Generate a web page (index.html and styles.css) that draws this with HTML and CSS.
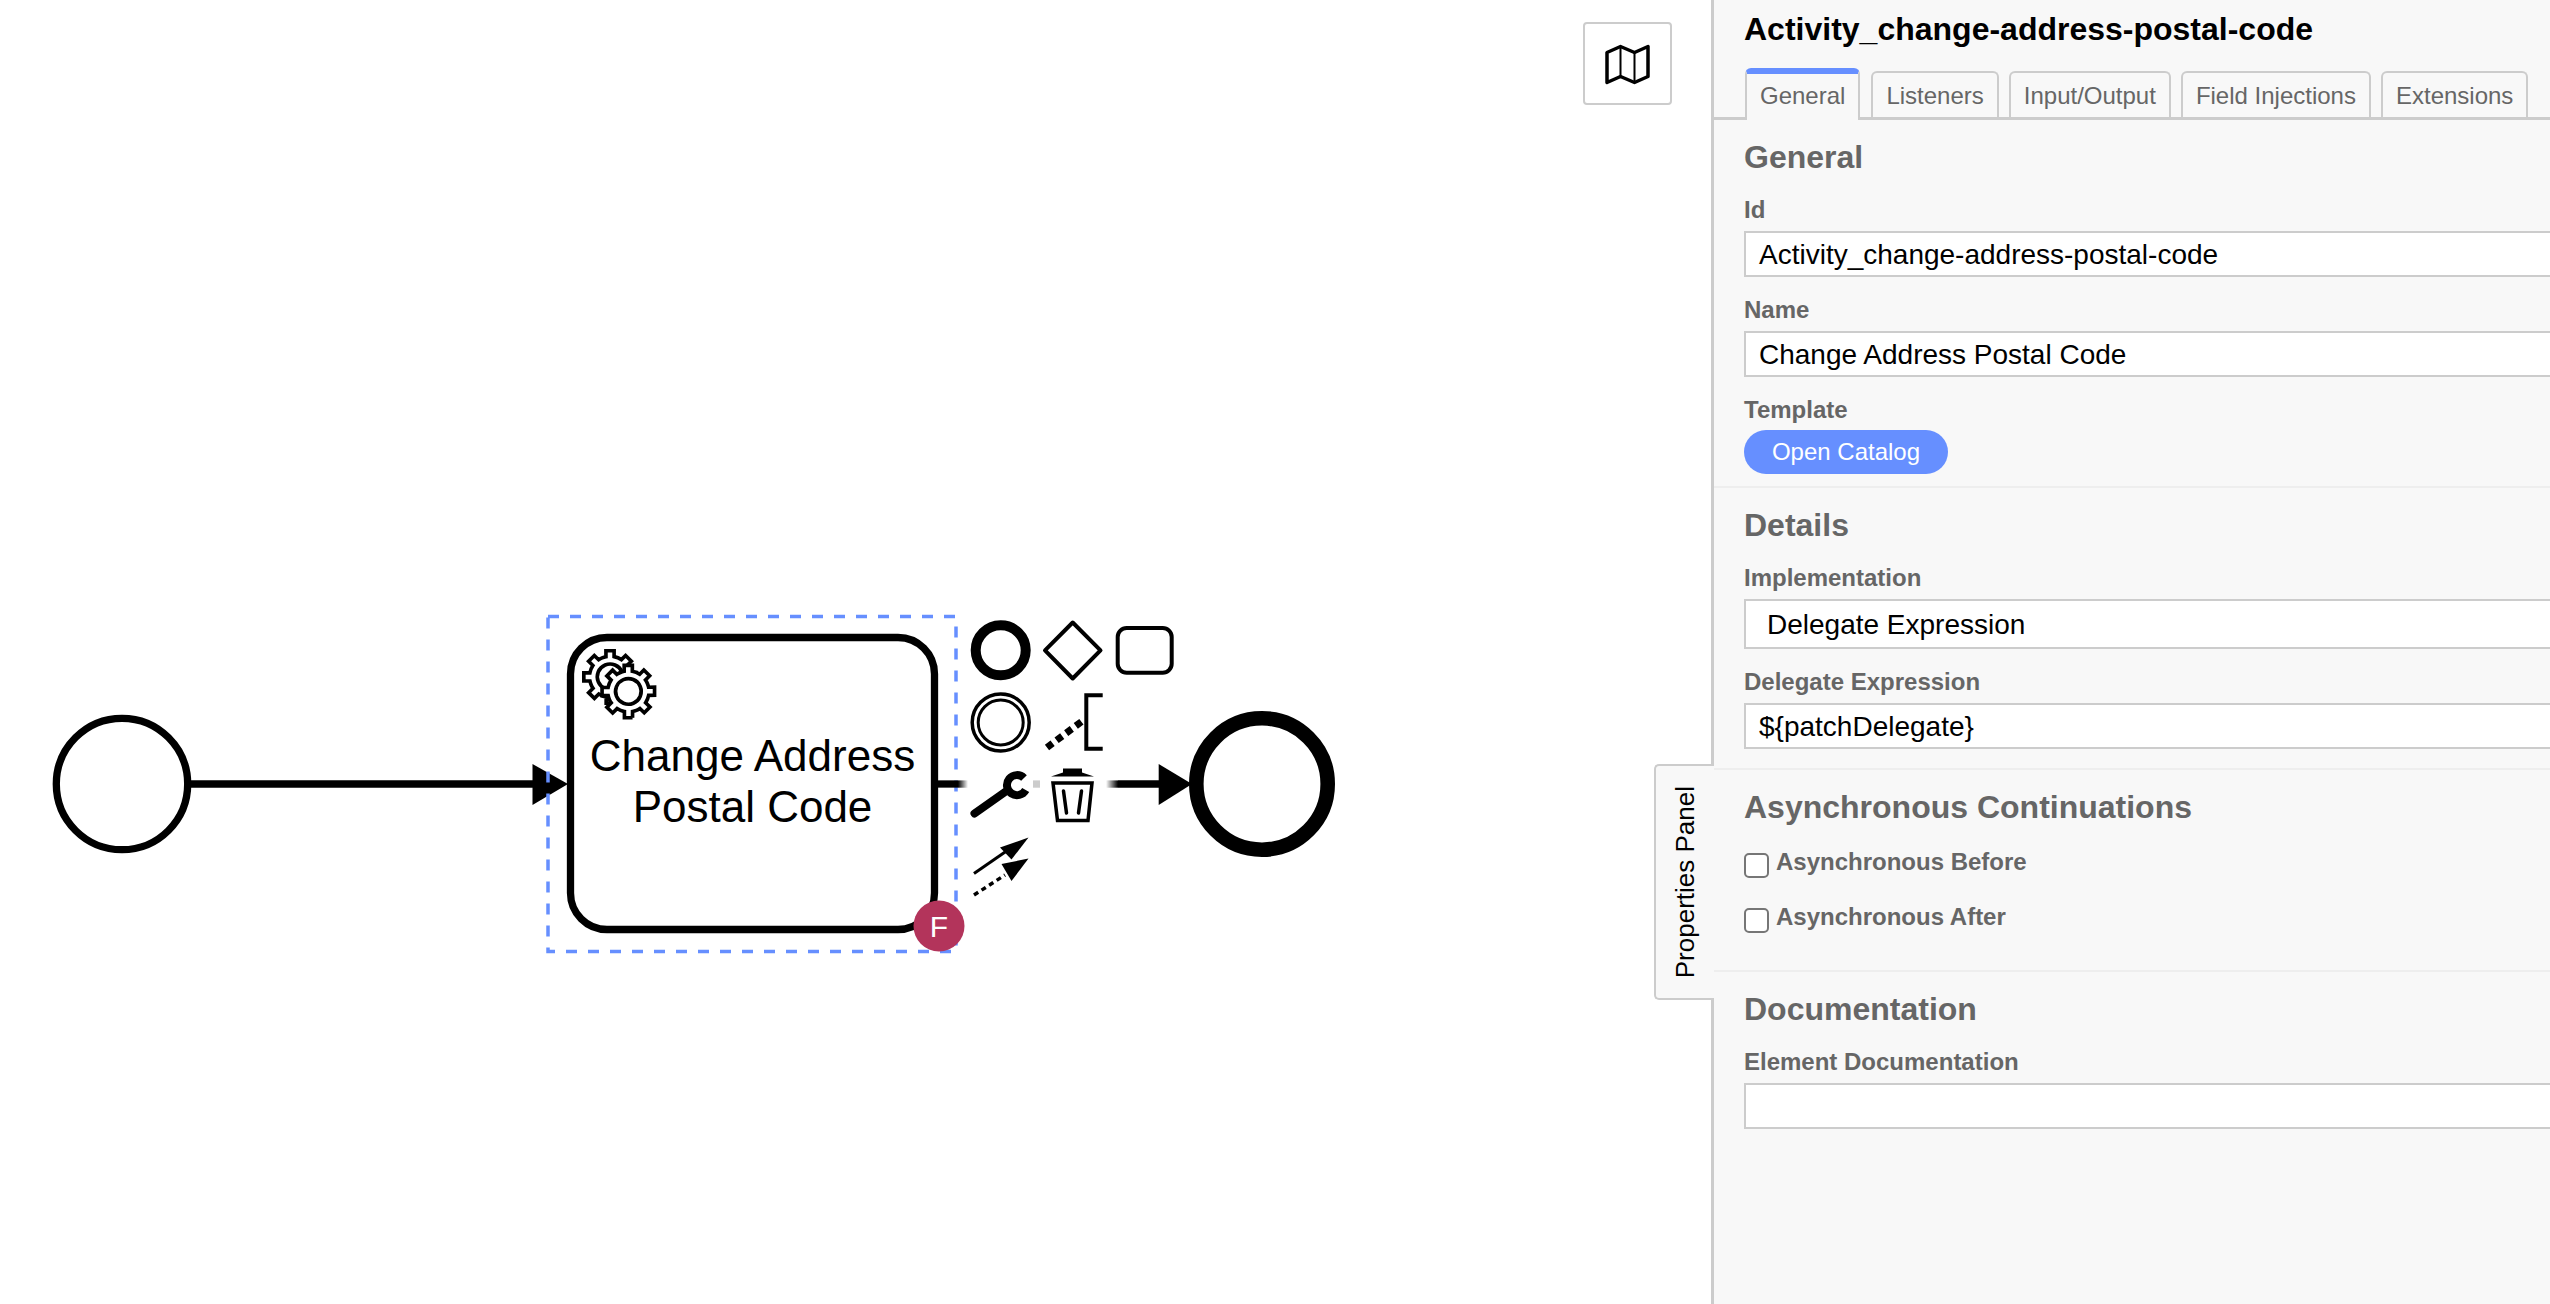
FILE: index.html
```html
<!DOCTYPE HTML>
<html>
<head>
<title>Activity_change-address-postal-code</title>
<meta charset="utf-8" />
<link rel="stylesheet" href="styles.css">
</head>
<body>
  <div class="canvas">
    <svg class="diagram" width="1711" height="1304" viewBox="0 0 1711 1304">
      <defs>
        <linearGradient id="fade-out" gradientUnits="userSpaceOnUse" x1="958" y1="0" x2="968" y2="0">
          <stop offset="0" stop-color="#000"/><stop offset="1" stop-color="#000" stop-opacity="0"/>
        </linearGradient>
        <linearGradient id="fade-in" gradientUnits="userSpaceOnUse" x1="1106" y1="0" x2="1118" y2="0">
          <stop offset="0" stop-color="#000" stop-opacity="0"/><stop offset="1" stop-color="#000"/>
        </linearGradient>
      </defs>

      <!-- start event -->
      <circle cx="122" cy="784" r="65.7" fill="#fff" stroke="#000" stroke-width="7.3"/>
      <line x1="190" y1="784" x2="540" y2="784" stroke="#000" stroke-width="7.3"/>

      <!-- task -->
      <rect x="570.5" y="637.5" width="364" height="292" rx="36.5" fill="#fff" stroke="#000" stroke-width="7.3"/>
      <polygon points="532.5,764 568,784 532.5,805" fill="#000"/>
      <g transform="translate(570.5 637.5) scale(3.65)" fill="#fff" stroke="#000" stroke-width="1">
        <path d="m 12,18 v -1.71335 c 0.352326,-0.0705 0.703932,-0.17838 1.047628,-0.32133 0.344416,-0.14465 0.665822,-0.32133 0.966377,-0.52145 l 1.19431,1.18005 1.567487,-1.57688 -1.195028,-1.18014 c 0.403376,-0.61394 0.683079,-1.29908 0.825447,-2.01824 l 1.622133,-0.01 v -2.2196 l -1.636514,0.01 c -0.07333,-0.35153 -0.178319,-0.70024 -0.323564,-1.04372 -0.145244,-0.34406 -0.321407,-0.6644 -0.522735,-0.96217 l 1.131035,-1.13631 -1.583305,-1.56293 -1.129598,1.13589 c -0.614052,-0.40108 -1.302883,-0.68093 -2.022633,-0.82247 l 0.0093,-1.61852 h -2.241173 l 0.0042,1.63124 c -0.353763,0.0736 -0.705369,0.17977 -1.049785,0.32371 -0.344415,0.14437 -0.665102,0.32092 -0.9635006,0.52046 l -1.1698628,-1.15823 -1.5667691,1.5792 1.1684265,1.15669 c -0.4026573,0.61283 -0.68308,1.29797 -0.8247287,2.01713 l -1.6588041,0.003 v 2.22174 l 1.6724648,-0.006 c 0.073327,0.35077 0.1797598,0.70243 0.3242851,1.04472 0.1452428,0.34448 0.3214064,0.6644 0.5227339,0.96066 l -1.1993431,1.19723 1.5840256,1.56011 1.1964668,-1.19348 c 0.6140517,0.40346 1.3028827,0.68232 2.0233517,0.82331 l 7.19e-4,1.69892 h 2.226848 z m 0.221462,-3.9957 c -1.788948,0.7502 -3.8576,-0.0928 -4.6097055,-1.87438 -0.7521065,-1.78321 0.090598,-3.84627 1.8802645,-4.59604 1.78823,-0.74936 3.856881,0.0929 4.608987,1.87437 0.752106,1.78165 -0.0906,3.84612 -1.879546,4.59605 z"/>
        <circle cx="15.86" cy="14.77" r="3.5" stroke="none"/>
        <path d="m 17,22 v -1.71335 c 0.352326,-0.0705 0.703932,-0.17838 1.047628,-0.32133 0.344416,-0.14465 0.665822,-0.32133 0.966377,-0.52145 l 1.19431,1.18005 1.567487,-1.57688 -1.195028,-1.18014 c 0.403376,-0.61394 0.683079,-1.29908 0.825447,-2.01824 l 1.622133,-0.01 v -2.2196 l -1.636514,0.01 c -0.07333,-0.35153 -0.178319,-0.70024 -0.323564,-1.04372 -0.145244,-0.34406 -0.321407,-0.6644 -0.522735,-0.96217 l 1.131035,-1.13631 -1.583305,-1.56293 -1.129598,1.13589 c -0.614052,-0.40108 -1.302883,-0.68093 -2.022633,-0.82247 l 0.0093,-1.61852 h -2.241173 l 0.0042,1.63124 c -0.353763,0.0736 -0.705369,0.17977 -1.049785,0.32371 -0.344415,0.14437 -0.665102,0.32092 -0.9635006,0.52046 l -1.1698628,-1.15823 -1.5667691,1.5792 1.1684265,1.15669 c -0.4026573,0.61283 -0.68308,1.29797 -0.8247287,2.01713 l -1.6588041,0.003 v 2.22174 l 1.6724648,-0.006 c 0.073327,0.35077 0.1797598,0.70243 0.3242851,1.04472 0.1452428,0.34448 0.3214064,0.6644 0.5227339,0.96066 l -1.1993431,1.19723 1.5840256,1.56011 1.1964668,-1.19348 c 0.6140517,0.40346 1.3028827,0.68232 2.0233517,0.82331 l 7.19e-4,1.69892 h 2.226848 z m 0.221462,-3.9957 c -1.788948,0.7502 -3.8576,-0.0928 -4.6097055,-1.87438 -0.7521065,-1.78321 0.090598,-3.84627 1.8802645,-4.59604 1.78823,-0.74936 3.856881,0.0929 4.608987,1.87437 0.752106,1.78165 -0.0906,3.84612 -1.879546,4.59605 z"/>
      </g>
      <text class="task-label" x="752.5" y="771">Change Address</text>
      <text class="task-label" x="752.5" y="822">Postal Code</text>

      <!-- selection outline -->
      <rect x="548" y="616.5" width="408" height="335" fill="none" stroke="#668fff" stroke-width="3.5" stroke-dasharray="11 11"/>

      <!-- outgoing flow, hidden behind the context pad -->
      <line x1="938" y1="784" x2="958" y2="784" stroke="#000" stroke-width="7.3"/>
      <rect x="958" y="780.4" width="10" height="7.3" fill="url(#fade-out)"/>
      <rect x="1033" y="780.4" width="7" height="7.3" fill="#ccc"/>
      <rect x="1106" y="780.4" width="12" height="7.3" fill="url(#fade-in)"/>
      <line x1="1118" y1="784" x2="1165" y2="784" stroke="#000" stroke-width="7.3"/>
      <polygon points="1158.7,764 1192,784 1158.7,805" fill="#000"/>

      <!-- end event -->
      <circle cx="1262" cy="784" r="65.7" fill="#fff" stroke="#000" stroke-width="14.6"/>

      <!-- badge -->
      <ellipse cx="939" cy="926" rx="25.5" ry="25.5" fill="#b3345b"/>
      <text class="badge-label" x="939" y="937">F</text>

      <!-- context pad -->
      <circle cx="1000.7" cy="650.3" r="25" fill="none" stroke="#000" stroke-width="10"/>
      <polygon points="1072.7,622.5 1100.5,650.3 1072.7,678.5 1045,650.3" fill="none" stroke="#000" stroke-width="4" stroke-linejoin="round"/>
      <rect x="1117.7" y="628" width="54" height="44.7" rx="9" fill="none" stroke="#000" stroke-width="4"/>
      <circle cx="1000.7" cy="722.5" r="28.5" fill="none" stroke="#000" stroke-width="3.5"/>
      <circle cx="1000.7" cy="722.5" r="22.5" fill="none" stroke="#000" stroke-width="3"/>
      <path d="M1102.7 695.3 H1086.3 V748.7 H1102.7" fill="none" stroke="#000" stroke-width="4"/>
      <line x1="1047" y1="747.5" x2="1083" y2="720.5" stroke="#000" stroke-width="7" stroke-dasharray="7 5"/>

      <line x1="974.5" y1="813.5" x2="1005" y2="792" stroke="#000" stroke-width="8" stroke-linecap="round"/>
      <path d="M1024 778 A10 10 0 1 0 1025.7 790" fill="none" stroke="#000" stroke-width="8"/>

      <path d="M1051 776.5 L1063 772.5 V768.5 H1082 V772.5 L1094 776.5 Z" fill="#000"/>
      <path d="M1053 783 H1092 L1088 820.5 H1057.5 Z" fill="none" stroke="#000" stroke-width="3.5"/>
      <line x1="1063.5" y1="791" x2="1066.5" y2="813" stroke="#000" stroke-width="3.5" stroke-linecap="round"/>
      <line x1="1081.5" y1="791" x2="1078.5" y2="813" stroke="#000" stroke-width="3.5" stroke-linecap="round"/>

      <line x1="974" y1="873.5" x2="1008" y2="850" stroke="#000" stroke-width="3"/>
      <polygon points="1028.5,837.5 1000,847.5 1011.5,859.5" fill="#000"/>
      <line x1="974" y1="895" x2="1005" y2="875" stroke="#000" stroke-width="3.5" stroke-dasharray="5 4"/>
      <polygon points="1028.5,858.5 1001.5,864 1011.5,881" fill="#000"/>
    </svg>

    <div class="map-btn">
      <svg width="50" height="44" viewBox="0 0 50 44">
        <path d="M4 10.5 L17.5 4.5 L31.5 10.5 L45 4.5 V34.5 L31.5 40.5 L17.5 34.5 L4 40.5 Z" fill="none" stroke="#000" stroke-width="3.5" stroke-linejoin="round"/>
        <path d="M17.5 4.5 V34.5 M31.5 10.5 V40.5" fill="none" stroke="#000" stroke-width="2"/>
      </svg>
    </div>
  </div>

  <div class="panel">
    <div class="panel-title">Activity_change-address-postal-code</div>
    <ul class="tabs">
      <li class="tab active">General</li>
      <li class="tab">Listeners</li>
      <li class="tab">Input/Output</li>
      <li class="tab">Field Injections</li>
      <li class="tab">Extensions</li>
    </ul>

    <div class="group first">
      <h3>General</h3>
      <div class="field">
        <label>Id</label>
        <div class="input">Activity_change-address-postal-code</div>
      </div>
      <div class="field">
        <label>Name</label>
        <div class="input">Change Address Postal Code</div>
      </div>
      <div class="field">
        <label>Template</label>
        <button class="catalog">Open Catalog</button>
      </div>
    </div>

    <div class="group details">
      <h3>Details</h3>
      <div class="field">
        <label>Implementation</label>
        <div class="input select">Delegate Expression</div>
      </div>
      <div class="field">
        <label>Delegate Expression</label>
        <div class="input">${patchDelegate}</div>
      </div>
    </div>

    <div class="group async">
      <h3>Asynchronous Continuations</h3>
      <div class="check"><input type="checkbox"><label>Asynchronous Before</label></div>
      <div class="check"><input type="checkbox"><label>Asynchronous After</label></div>
    </div>

    <div class="group">
      <h3>Documentation</h3>
      <div class="field">
        <label>Element Documentation</label>
        <div class="input"></div>
      </div>
    </div>
  </div>

  <div class="panel-toggle"><span>Properties Panel</span></div>
</body>
</html>
```

FILE: styles.css
```css
*{
  margin:0;
  padding:0;
  box-sizing:border-box;
}
html,body{
  height:100%;
}
body{
  display:flex;
  overflow:hidden;
  background:#fff;
  font-family:"Liberation Sans",Arial,sans-serif;
}

/* canvas */
.canvas{
  position:relative;
  flex:none;
  width:1711px;
}
.diagram{
  display:block;
}
.task-label{
  font-size:44px;
  text-anchor:middle;
  fill:#000;
}
.badge-label{
  font-size:30px;
  text-anchor:middle;
  fill:#fff;
}
.map-btn{
  position:absolute;
  top:22px;
  left:1583px;
  width:89px;
  height:83px;
  display:flex;
  align-items:center;
  justify-content:center;
  background:#fff;
  border:2px solid #ccc;
  border-radius:4px;
}

/* panel */
.panel{
  flex:none;
  width:839px;
  height:100%;
  overflow:hidden;
  background:#f8f8f8;
  border-left:3px solid #ccc;
}
.panel-title{
  height:68px;
  padding:11px 0 0 30px;
  font-size:32px;
  line-height:36px;
  font-weight:bold;
  color:#000;
}
.tabs{
  display:flex;
  align-items:flex-end;
  gap:10px;
  height:52px;
  padding-left:31px;
  list-style:none;
  border-bottom:3px solid #ccc;
}
.tab{
  height:47px;
  margin-bottom:-1px;
  padding:0 13px;
  font-size:24px;
  line-height:45px;
  color:#666;
  white-space:nowrap;
  border:2px solid #ccc;
  border-bottom:0;
  border-radius:6px 6px 0 0;
}
.tab.active{
  height:52px;
  margin-bottom:-3px;
  margin-right:1px;
  line-height:44px;
  background:#f8f8f8;
  border-top:6px solid #668fff;
}

.group{
  padding:17px 0 18px 30px;
  border-top:2px solid #eee;
}
.group.first{
  padding-bottom:12px;
  border-top:0;
}
.group.details{
  padding-bottom:19px;
}
.group h3{
  height:40px;
  font-size:32px;
  line-height:40px;
  font-weight:bold;
  color:#666;
}
.field{
  margin-top:19px;
}
.field label,.check label{
  display:block;
  height:28px;
  font-size:24px;
  line-height:28px;
  font-weight:bold;
  color:#666;
}
.input{
  width:900px;
  height:46px;
  margin-top:7px;
  padding:0 13px;
  font-size:28px;
  line-height:44px;
  color:#000;
  background:#fff;
  border:2px solid #ccc;
}
.input.select{
  height:50px;
  padding-left:21px;
  line-height:48px;
}
.catalog{
  display:block;
  width:204px;
  height:44px;
  margin-top:6px;
  font-family:inherit;
  font-size:24px;
  color:#fff;
  background:#668fff;
  border:0;
  border-radius:22px;
}

.group.async{
  padding-bottom:37px;
}
.check{
  display:flex;
  gap:7px;
  margin-top:25px;
}
.group.async h3{
  margin-bottom:-4px;
}
.check input{
  flex:none;
  appearance:none;
  width:25px;
  height:25px;
  margin-top:5px;
  background:#fff;
  border:2px solid #767676;
  border-radius:5px;
}

/* toggle on the panel edge */
.panel-toggle{
  position:absolute;
  top:764px;
  left:1654px;
  width:60px;
  height:236px;
  display:flex;
  align-items:center;
  justify-content:center;
  background:#f8f8f8;
  border:2px solid #ccc;
  border-right:0;
  border-radius:5px 0 0 5px;
}
.panel-toggle span{
  writing-mode:vertical-rl;
  transform:rotate(180deg);
  font-size:26px;
  line-height:30px;
  color:#000;
  white-space:nowrap;
}
```
